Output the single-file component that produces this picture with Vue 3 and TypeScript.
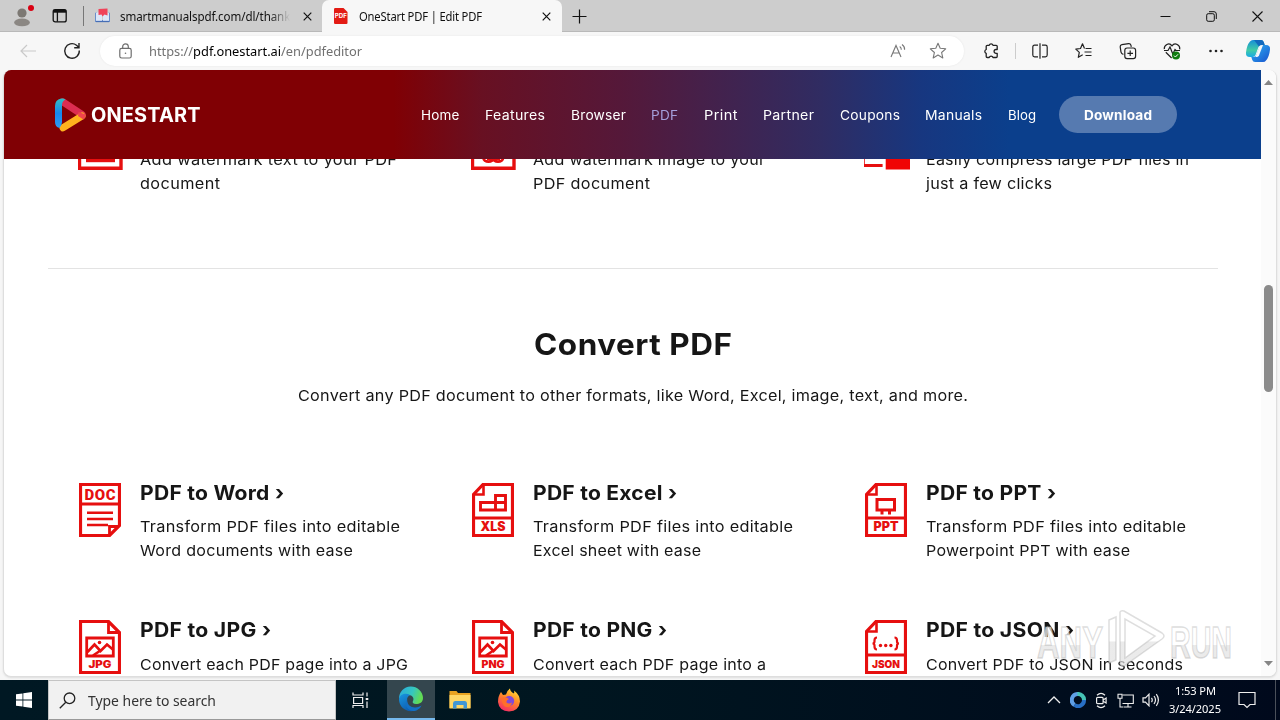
<script setup lang="ts">
interface NavItem { label: string; width: number; active?: boolean }
interface Line { text: string; width: number }
interface Tool { icon: string; title: Line; lines: Line[] }

// Makes a text span the given width, sharing the difference between glyph width and letter spacing.
const fit = (el: HTMLElement, target: number): void => {
  const natural = el.getBoundingClientRect().width
  const gaps = (el.textContent ?? '').length - 1
  if (gaps < 1 || natural === 0) return
  const scale = Math.pow(target / natural, 0.7)
  el.style.letterSpacing = `${((target / scale - natural) / gaps).toFixed(3)}px`
  el.style.transform = `scaleX(${scale.toFixed(4)})`
  el.style.width = `${target}px`
}
const vFit = {
  mounted: (el: HTMLElement, binding: { value: number }) => fit(el, binding.value),
}

const nav: NavItem[] = [
  { label: 'Home', width: 38.5 },
  { label: 'Features', width: 60 },
  { label: 'Browser', width: 55 },
  { label: 'PDF', width: 27, active: true },
  { label: 'Print', width: 33.5 },
  { label: 'Partner', width: 51 },
  { label: 'Coupons', width: 60 },
  { label: 'Manuals', width: 57 },
  { label: 'Blog', width: 28 },
]

const editTools: { icon: string; lines: Line[] }[] = [
  { icon: 'text', lines: [{ text: 'Add watermark text to your PDF', width: 257 }, { text: 'document', width: 80 }] },
  { icon: 'image', lines: [{ text: 'Add watermark image to your', width: 232 }, { text: 'PDF document', width: 117 }] },
  { icon: 'compress', lines: [{ text: 'Easily compress large PDF files in', width: 263 }, { text: 'just a few clicks', width: 126 }] },
]

const tools: Tool[] = [
  { icon: 'DOC', title: { text: 'PDF to Word ›', width: 144 }, lines: [{ text: 'Transform PDF files into editable', width: 260 }, { text: 'Word documents with ease', width: 213 }] },
  { icon: 'XLS', title: { text: 'PDF to Excel ›', width: 144 }, lines: [{ text: 'Transform PDF files into editable', width: 260 }, { text: 'Excel sheet with ease', width: 168 }] },
  { icon: 'PPT', title: { text: 'PDF to PPT ›', width: 130 }, lines: [{ text: 'Transform PDF files into editable', width: 260 }, { text: 'Powerpoint PPT with ease', width: 204 }] },
  { icon: 'JPG', title: { text: 'PDF to JPG ›', width: 131 }, lines: [{ text: 'Convert each PDF page into a JPG', width: 268 }] },
  { icon: 'PNG', title: { text: 'PDF to PNG ›', width: 134 }, lines: [{ text: 'Convert each PDF page into a', width: 233 }] },
  { icon: 'JSON', title: { text: 'PDF to JSON ›', width: 148 }, lines: [{ text: 'Convert PDF to JSON in seconds', width: 257 }] },
]
</script>

<template>
  <div class="desktop">
    <div class="tabstrip">
      <svg class="profile" width="24" height="24" viewBox="0 0 24 24">
        <circle cx="10" cy="8" r="4.600" fill="#7c7873" />
        <ellipse cx="10" cy="17.400" rx="7.900" ry="3.900" fill="#8b8783" />
        <circle cx="19" cy="3" r="3" fill="#d90012" />
      </svg>
      <svg class="workspaces" width="16" height="16" viewBox="0 0 16 16" fill="none" stroke="#111" stroke-width="1.300">
        <rect x="1.200" y="1.700" width="13" height="12.200" rx="2" />
        <path d="M1.200 3.200h13" stroke-width="3" /><path d="M5.400 4v9.600" />
      </svg>
      <span class="sep"></span>
      <div class="tab">
        <svg width="17" height="16" viewBox="0 0 17 16">
          <path d="M1 5l2-1v8l11 0V4l2 1v9H1z" fill="#6b8fc9" />
          <path d="M2 4.500h6v9.500l-6-1zM9 4.500h6V13l-6 1z" fill="#dce7f8" />
          <path d="M4.500 1l9-.5v7l-3-1-2 2-1-2-3 .5z" fill="#f0435a" />
          <path d="M2 13.500h13" stroke="#466eb5" stroke-width="1.300" />
        </svg>
        <span class="tab-title faded"><span v-fit="174" class="fit">smartmanualspdf.com/dl/thank-</span></span>
        <svg class="close" width="9" height="9" viewBox="0 0 9 9" stroke="#111" stroke-width="1.200"><path d="M.7.7l7.600 7.600M8.300.7L.7 8.300" /></svg>
      </div>
      <div class="tab active">
        <svg class="pdf-icon" width="14" height="16" viewBox="0 0 14 16">
          <path d="M0 1.200Q0 0 1.200 0H9.500L13.500 4v11q0 1-1.200 1H1.200Q0 16 0 15z" fill="#e31b14" />
          <text x=".8" y="10.300" font-family="Inter, sans-serif" font-weight="700" font-size="5.500" fill="#fff" textLength="12" lengthAdjust="spacingAndGlyphs">PDF</text>
        </svg>
        <span v-fit="123" class="fit active-title">OneStart PDF | Edit PDF</span>
        <svg class="close" width="9" height="9" viewBox="0 0 9 9" stroke="#111" stroke-width="1.200"><path d="M.7.7l7.600 7.600M8.300.7L.7 8.300" /></svg>
      </div>
      <svg class="plus" width="15" height="15" viewBox="0 0 15 15" stroke="#111" stroke-width="1.200"><path d="M7.500.500v14M.500 7.500h14" /></svg>
      <div class="window-buttons">
        <svg width="11" height="11" viewBox="0 0 11 11" stroke="#111"><path d="M.5 5.500h10" /></svg>
        <svg width="11" height="11" viewBox="0 0 11 11" fill="none" stroke="#111"><rect x=".7" y="2.700" width="7.600" height="7.600" rx="1.500" /><path d="M3 .7h5q2.300 0 2.300 2.300v5" /></svg>
        <svg width="11" height="11" viewBox="0 0 11 11" stroke="#111" stroke-width="1.100"><path d="M.5.500l10 10M10.500.500l-10 10" /></svg>
      </div>
    </div>

    <div class="toolbar">
      <svg class="back" width="17" height="14" viewBox="0 0 17 14" fill="none" stroke="#c9c9c9" stroke-width="1.200"><path d="M16 7H1M7 1L1 7l6 6" /></svg>
      <svg class="reload" width="18" height="18" viewBox="0 0 18 18" fill="none" stroke="#222" stroke-width="1.400"><path d="M16.300 8.500A7.300 7.300 0 1 1 13.500 3.200L16 5.600M16 1v4.800h-4.800" /></svg>
      <div class="address">
        <svg class="lock" width="13" height="16" viewBox="0 0 13 16" fill="none" stroke="#6e6e6e" stroke-width="1.200"><rect x=".8" y="5.400" width="11.400" height="9.600" rx="1.800" /><path d="M3.700 5.400V3.600a2.800 2.800 0 0 1 5.600 0v1.800" /><circle cx="6.500" cy="10.200" r=".8" fill="#6e6e6e" stroke="none" /></svg>
        <span v-fit="213" class="fit url">https://<b>pdf.onestart.ai</b>/en/pdfeditor</span>
        <svg class="read" width="17" height="16" viewBox="0 0 17 16" fill="none" stroke="#777" stroke-width="1.100"><path d="M1 14L6 2.500 11 14M2.800 10h6.400M9.700 3.500q1.800 1.200 1.600 3.300M12 1.500q2.900 2 2.600 5.300" /></svg>
        <svg class="star" width="18" height="18" viewBox="0 0 18 18" fill="none" stroke="#777" stroke-width="1.100" stroke-linejoin="round"><path d="M9 1.300l2.200 5 5.500.5-4.100 3.700 1.200 5.400L9 13.100l-4.800 2.800 1.200-5.400L1.300 6.800l5.500-.5z" /></svg>
      </div>
      <div class="actions">
        <svg width="18" height="18" viewBox="0 0 18 18" fill="none" stroke="#222" stroke-width="1.300" stroke-linejoin="round"><path d="M5.200 3.300h2a2 2 0 0 1 3.800 0h3.200q1 0 1 1v3.200h-1.200a1.800 1.800 0 0 0 0 3.800h1.200v3.200q0 1-1 1H11a2 2 0 0 0-3.800 0h-2q-1 0-1-1v-3.200a2 2 0 0 1 0-3.800V4.300q0-1 1-1z" /></svg>
        <span class="divider"></span>
        <svg width="18" height="18" viewBox="0 0 18 18" fill="none" stroke="#222" stroke-width="1.200"><path d="M7 3.200H3.600q-1.800 0-1.800 1.800v8q0 1.800 1.800 1.800H7M11 3.200h3.400q1.800 0 1.800 1.800v8q0 1.800-1.800 1.800H11M9 1.200v15.600" /></svg>
        <svg width="18" height="18" viewBox="0 0 18 18" fill="none" stroke="#222" stroke-width="1.200" stroke-linejoin="round"><path d="M9.500 6.500L7.500 1.800 5.500 6.500l-4.700.6 3.500 3.300-1 4.900 4.400-2.500M10.500 6.500h6M9.500 10h7M10.500 13.500h6" /></svg>
        <svg width="18" height="18" viewBox="0 0 18 18" fill="none" stroke="#222" stroke-width="1.200"><path d="M4.400 12.400Q2.500 12 2 10.100L1.200 4.800Q1 3 2.900 2.700L9.600 1.600q1.800-.2 2.300 1.500l.4 1.800" /><rect x="5.800" y="6" width="10.800" height="10.600" rx="2.300" /><path d="M11.200 8.500v5.600M8.400 11.300H14" /></svg>
        <svg width="18" height="18" viewBox="0 0 18 18" fill="none" stroke="#222" stroke-width="1.200"><path d="M1.300 7.200C.8 3.300 6-.3 9 3.800c3-4.100 8.400-.4 7.700 3.600M1 8.500h4l2-3.500 2.800 7L12 7.500l1 1h4M2.800 10.300L8.600 16" /><circle cx="13" cy="13.500" r="4" fill="#107c10" stroke="none" /><path d="M11 13.600l1.400 1.400 2.600-2.700" stroke="#fff" stroke-width="1" /></svg>
        <svg width="18" height="18" viewBox="0 0 18 18" fill="#222"><circle cx="3.500" cy="9" r="1.300" /><circle cx="9" cy="9" r="1.300" /><circle cx="14.500" cy="9" r="1.300" /></svg>
      </div>
      <svg class="copilot" width="26" height="24" viewBox="0 0 26 24">
        <defs>
          <linearGradient id="cpA" x1="0" y1="0" x2="0" y2="1"><stop offset="0" stop-color="#168ed7" /><stop offset=".6" stop-color="#41cba6" /><stop offset="1" stop-color="#18a9e5" /></linearGradient>
          <linearGradient id="cpB" x1="0" y1="0" x2="1" y2="1"><stop offset="0" stop-color="#2cb4f5" /><stop offset="1" stop-color="#1952cd" /></linearGradient>
        </defs>
        <path d="M8 1h8q2 0 2.700 2l1 3h-3.500q-2 0-2.800 2.200L10.500 16q-.8 2-3 2H5q-4.500 0-4-4.500Q1.800 6 5 2.500 6 1 8 1z" fill="url(#cpA)" />
        <path d="M18 23h-8q-2 0-2.700-2l-1-3h2q2.400 0 3.200-2.200L14.500 8q.8-2 3-2H21q4.500 0 4 4.500-.8 7.500-4 11Q20 23 18 23z" fill="url(#cpB)" />
        <path d="M9 1h7q2 0 2.700 2l1 3h-3.500q-1.500 0-2.300 1.500z" fill="#1269bd" />
        <path d="M14.500 7.500q.8-1.500 2.500-1.500h1L14 16.500q-.8 1.500-2.500 1.500h-1z" fill="#f7f7f7" />
      </svg>
    </div>

    <div class="page">
      <div class="site">
        <header class="site-header">
          <svg class="logo" width="32" height="34" viewBox="0 0 32 34" fill="none">
            <defs>
              <linearGradient id="lgB" x1="0" y1="0" x2="0" y2="1"><stop offset="0" stop-color="#32bec3" /><stop offset=".5" stop-color="#1687ee" /><stop offset="1" stop-color="#2f9bf2" /></linearGradient>
            </defs>
            <path d="M8 4L27 16.500" stroke="#dc2d51" stroke-width="7" stroke-linecap="round" />
            <path d="M8 29.800L27 18" stroke="#ffb21e" stroke-width="7" stroke-linecap="round" />
            <path d="M23.500 14l7.400 2.500q.3 2.500-2.400 5l-5.500-3.500z" fill="#f0444c" />
            <path d="M0 8Q0 2 6 .6 8.500.2 10.500 1.500 7 3 7 7v17q0 3-2.500 6Q0 29 0 24z" fill="url(#lgB)" />
          </svg>
          <span v-fit="109.5" class="fit brand">ONESTART</span>
          <nav class="nav">
            <span v-for="item in nav" :key="item.label" v-fit="item.width" class="fit" :class="{ current: item.active }">{{ item.label }}</span>
          </nav>
          <div class="download"><span v-fit="68" class="fit">Download</span></div>
        </header>

        <section class="edit-row">
          <div v-for="tool in editTools" :key="tool.icon" class="edit-card">
            <svg width="62" height="22" viewBox="0 0 62 22" fill="none" stroke="#e60f0f">
              <template v-if="tool.icon === 'text'">
                <path d="M1.500 0v20.300H43V0" stroke-width="3.400" /><rect x="8" y="8" width="29" height="6.200" fill="#e60f0f" stroke="none" />
              </template>
              <template v-else-if="tool.icon === 'image'">
                <path d="M1.500 0v20.300H43V0" stroke-width="3.400" /><ellipse cx="17.500" cy="10" rx="5" ry="3.600" stroke-width="2.800" /><ellipse cx="27" cy="10" rx="5" ry="3.600" stroke-width="2.800" /><path d="M16 11h13" stroke-width="2.600" />
              </template>
              <template v-else>
                <path d="M-.7 0v17.500h19.300" stroke-width="3" /><rect x="21.700" y="0" width="24.300" height="21.500" fill="#f00505" stroke="none" />
              </template>
            </svg>
            <div class="desc"><p v-for="l in tool.lines" :key="l.text"><span v-fit="l.width" class="fit">{{ l.text }}</span></p></div>
          </div>
        </section>

        <hr class="rule" />
        <h1 class="heading"><span v-fit="198" class="fit">Convert PDF</span></h1>
        <p class="lead"><span v-fit="670" class="fit">Convert any PDF document to other formats, like Word, Excel, image, text, and more.</span></p>

        <section class="tools">
          <article v-for="tool in tools" :key="tool.icon" class="tool">
            <svg width="42" height="54" viewBox="0 0 42 54" fill="none" stroke="#e60f0f" stroke-width="3.200">
              <template v-if="tool.icon === 'DOC'">
                <path d="M1.500 1.500h39v41l-10 10h-29zM1.500 21h39" /><path d="M8 29.700h26M8 36h26M8 42h21" stroke-width="2.500" /><path d="M30.500 52v-8.500H40" stroke-width="2.800" />
                <text class="doc-label" x="5.500" y="16.800" font-size="15" textLength="31" fill="#e60f0f" stroke="none">DOC</text>
              </template>
              <template v-else-if="tool.icon === 'JPG' || tool.icon === 'PNG'">
                <path d="M1.500 1.500h28l11 11v40h-39z" /><path d="M29.500 2v10.500H40M7.700 18h26.600v18h-26.600z" stroke-width="2.800" />
                <path d="M8.500 32l7-7.500 6 6.500 6.500-6.500 6.500 5.500M14 35.500l7.500-5" stroke-width="2.600" /><circle cx="20.500" cy="22.500" r="1.800" fill="#e60f0f" stroke="none" />
                <text x="9.500" y="48.300" font-size="10" font-weight="900" textLength="23" lengthAdjust="spacingAndGlyphs" fill="#e60f0f" stroke="none">{{ tool.icon }}</text>
              </template>
              <template v-else>
                <path d="M11 1.500h29.500v51h-39v-41zM1.500 35h39" /><path d="M11.500 2v9.500H2" stroke-width="2.600" />
                <path v-if="tool.icon === 'XLS'" d="M8.500 19.500h25v7.500h-25zM23.500 27V12.500h10V27" stroke-width="2.900" />
                <path v-else-if="tool.icon === 'PPT'" d="M12 16.500h17.500V27H12zM17 27.500v4M24.500 27.500v4" stroke-width="3" />
                <template v-else>
                  <path d="M12 17.500q-2.500 0-2.500 3v1q0 2-2 2 2 0 2 2v1q0 3 2.500 3M29.500 17.500q2.500 0 2.500 3v1q0 2 2 2-2 0-2 2v1q0 3-2.500 3" stroke-width="2.200" />
                  <g fill="#e60f0f" stroke="none"><circle cx="15.500" cy="25.500" r="1.700" /><circle cx="20.700" cy="25.500" r="1.700" /><circle cx="25.900" cy="25.500" r="1.700" /></g>
                </template>
                <text :x="tool.icon === 'JSON' ? 7 : 8.500" :y="tool.icon === 'JSON' ? 47.500 : 48" :font-size="tool.icon === 'JSON' ? 10.500 : 12.500" font-weight="900" :textLength="tool.icon === 'JSON' ? 28 : 25" lengthAdjust="spacingAndGlyphs" fill="#e60f0f" stroke="none">{{ tool.icon }}</text>
              </template>
            </svg>
            <div class="tool-body">
              <h2><span v-fit="tool.title.width" class="fit">{{ tool.title.text }}</span></h2>
              <div class="desc"><p v-for="l in tool.lines" :key="l.text"><span v-fit="l.width" class="fit">{{ l.text }}</span></p></div>
            </div>
          </article>
        </section>
      </div>
      <div class="scrollbar">
        <svg width="9" height="5" viewBox="0 0 9 5"><path d="M4.500 0L9 5H0z" fill="#858585" /></svg>
        <div class="thumb"></div>
        <svg width="9" height="5" viewBox="0 0 9 5"><path d="M4.500 5L9 0H0z" fill="#858585" /></svg>
      </div>
    </div>

    <div class="taskbar">
      <div class="start"><svg width="16" height="16" viewBox="0 0 16 16" fill="#fff"><path d="M0 2.300L6.500 1.400v6.200H0zM7.300 1.300L16 0v7.600H7.300zM0 8.400h6.500v6.200L0 13.700zM7.300 8.400H16V16L7.300 14.700z" /></svg></div>
      <div class="search">
        <svg width="17" height="17" viewBox="0 0 17 17" fill="none" stroke="#222" stroke-width="1.300"><circle cx="10.500" cy="6.300" r="5.300" /><path d="M6.800 10.200L.8 16.200" /></svg>
        <span v-fit="128" class="fit">Type here to search</span>
      </div>
      <div class="task"><svg width="18" height="17" viewBox="0 0 18 17" fill="none" stroke="#eee" stroke-width="1.200"><path d="M1 .500v2.500h10V.500M1 16v-2.500h10V16M1.600 5.500h9v6h-9zM15 .500v4M15 9.500V16" /><path d="M13.700 7h2.600" stroke-width="2" /></svg></div>
      <div class="task edge">
        <svg width="26" height="26" viewBox="0 0 26 26">
          <defs>
            <linearGradient id="edA" x1="0" y1="0" x2="1" y2=".3"><stop offset="0" stop-color="#28a8df" /><stop offset=".6" stop-color="#35c6c0" /><stop offset="1" stop-color="#62db55" /></linearGradient>
            <linearGradient id="edB" x1="0" y1="0" x2=".8" y2="1"><stop offset="0" stop-color="#1895e0" /><stop offset="1" stop-color="#0b51a5" /></linearGradient>
          </defs>
          <path d="M1 13A12 12 0 0 1 25 12c0 4.500-3.500 6-7 6-3 0-4-1.500-3-3 1.500-2.500-.5-6-4.500-6S2 11 1 13z" fill="url(#edA)" />
          <path d="M1 13C2 8 8 6.500 12 9c-4 2-4 8-.5 11 3.500 2.800 8.500 2.500 12-.5C20 25 13 26.500 8 24c-5-2.300-7-6.500-7-11z" fill="url(#edB)" />
          <path d="M9.500 13c-1.500 5 3 9 8 8.500 2.500-.2 4.500-1 6-2-3 6-8.500 6-11 5-4-2-6-7-3-11.500z" fill="#1370c5" />
        </svg>
      </div>
      <div class="task">
        <svg width="22" height="20" viewBox="0 0 22 20"><path d="M.5 1h7l1.500 2h12.500v15H.5z" fill="#e9a321" /><path d="M.5 5h21v13.500H.5z" fill="#ffd766" /><path d="M4 18.500v-5q0-2.500 2-2.500h10q2 0 2 2.500v5h-3.500V15h-7v3.500z" fill="#4197d6" /></svg>
      </div>
      <div class="task">
        <svg width="24" height="24" viewBox="0 0 24 24">
          <defs><linearGradient id="ff" x1=".8" y1="0" x2=".3" y2="1"><stop offset="0" stop-color="#ffe43a" /><stop offset=".45" stop-color="#ff8b26" /><stop offset="1" stop-color="#f52b65" /></linearGradient></defs>
          <path d="M4 4l2 3 3-.5Q10 2.500 13 .500q0 3 4 5 .5-1.500 0-3Q23 7 23 13.500 22 23 12 23.500 2 23 1 14 1 8 4 4z" fill="url(#ff)" />
          <circle cx="12.200" cy="13" r="5" fill="#8049d9" /><path d="M4.500 10q4-2 7.500 1-3 1-2.500 3.500 2.500 2 5.500 0-1 5-6 4.500-4-1.500-4.500-9z" fill="#ff6f2a" />
        </svg>
      </div>
      <div class="tray">
        <svg width="14" height="8" viewBox="0 0 14 8" fill="none" stroke="#eee" stroke-width="1.300"><path d="M1 7l6-6 6 6" /></svg>
        <svg width="16" height="16" viewBox="0 0 16 16" fill="none" stroke-width="4"><path d="M4.500 13A6 6 0 0 1 8 2" stroke="#5f9fe6" /><path d="M7.500 2a6 6 0 0 1 6.500 6.500" stroke="#45c3b5" /><path d="M14 8A6 6 0 0 1 4.500 13" stroke="#286fc4" /></svg>
        <svg width="14" height="17" viewBox="0 0 14 17" fill="none" stroke="#eee" stroke-width="1.200"><path d="M3 3.200q4-3.500 8 0M3 13.800q4 3.500 8 0" /><rect x="2.600" y="5.300" width="6.500" height="6.400" rx="1" /><path d="M9.100 8l3-2v5l-3-1.700" /></svg>
        <svg width="17" height="15" viewBox="0 0 17 15" fill="none" stroke="#eee" stroke-width="1.100"><path d="M5.500 2h10.800v8.500H5.500M11 10.500V14M6.500 14h8" /><path d="M1 1.200h4v4H1zM3 5.200V14h3" /></svg>
        <svg width="18" height="14" viewBox="0 0 18 14" fill="none" stroke="#eee" stroke-width="1.200"><path d="M1 4.800h2.500L7 1.200v11.600L3.500 9.200H1zM9.500 4.800q1.500 2.200 0 4.400M12 3q3 4 0 8M14.300 1.200q4.200 5.800 0 11.600" /></svg>
      </div>
      <div class="clock"><span v-fit="41" class="fit">1:53 PM</span><span v-fit="52" class="fit">3/24/2025</span></div>
      <svg class="note" width="18" height="18" viewBox="0 0 18 18" fill="none" stroke="#eee" stroke-width="1.200"><path d="M1 1.500h16v12h-5l-3 3-3-3H1z" /></svg>
      <span class="peek"></span>
    </div>

    <svg class="watermark" width="204" height="64" viewBox="0 0 204 64">
      <defs><linearGradient id="wm" x1="0" y1="0" x2="0" y2="1"><stop offset="0" stop-color="#fff" stop-opacity=".72" /><stop offset=".55" stop-color="#fff" stop-opacity=".72" /><stop offset=".56" stop-color="#e2e2e2" stop-opacity=".7" /><stop offset="1" stop-color="#e2e2e2" stop-opacity=".7" /></linearGradient></defs>
      <g fill="url(#wm)" stroke="#a8a8a8" stroke-opacity=".38" stroke-width="1.500">
        <text x="4" y="51" font-size="44" textLength="66" lengthAdjust="spacingAndGlyphs">ANY</text>
        <text x="137" y="51" font-size="44" textLength="62" lengthAdjust="spacingAndGlyphs">RUN</text>
        <path fill-rule="evenodd" d="M76 13l7-3v43l-7 3zM87 5q1-2 4-1l38 22q4 3 0 6L91 59q-4 1-4-3zM92 12v39l30-22z" />
      </g>
    </svg>
  </div>
</template>

<style>
html, body { overflow: hidden; }
</style>

<style scoped>
* { box-sizing: border-box; }
.desktop { position: relative; width: 1280px; height: 720px; display: flex; flex-direction: column; background: #f6f6f6; font-family: "Noto Sans", "Open Sans", sans-serif; overflow: hidden; }
svg { display: block; flex: none; }
.fit { display: inline-block; white-space: pre; flex: none; text-align: left; transform-origin: 0 50%; }

.tabstrip { height: 32px; flex: none; display: flex; align-items: center; background: #cdcdcd; font-size: 12px; color: #111; box-shadow: inset 0 -1px #b9b9b9; }
.profile { margin: 1px 0 0 12px; }
.workspaces { margin-left: 16px; }
.sep { width: 1px; height: 20px; background: #777; margin-left: 15px; }
.tab { width: 238px; height: 32px; display: flex; align-items: center; padding-left: 10px; }
.tab-title { margin-left: 9px; width: 170px; overflow: hidden; }
.faded { mask-image: linear-gradient(90deg, #000 88%, transparent 100%); }
.tab .close { margin-left: 13px; }
.tab.active { width: 240px; background: #f7f7f7; border-radius: 7px 7px 0 0; padding-left: 12px; }
.active-title { margin-left: 11px; }
.tab.active .close { margin-left: 60px; }
.plus { margin-left: 10px; }
.window-buttons { margin-left: auto; margin-right: 17px; display: flex; gap: 35px; }

.toolbar { height: 38px; flex: none; display: flex; align-items: center; background: #f7f7f7; }
.back { margin-left: 20px; }
.reload { margin-left: 26px; }
.address { margin-left: 19px; width: 864px; height: 30px; border-radius: 15px; background: #fff; display: flex; align-items: center; box-shadow: 0 0 2px #e4e4e4; }
.lock { margin-left: 19px; }
.url { margin-left: 17px; font-size: 13px; color: #717171; }
.url b { font-weight: 400; color: #000; }
.read { margin-left: auto; }
.star { margin: 0 17px 0 22px; }
.actions { display: flex; align-items: center; margin-left: 18px; gap: 26px; }
.divider { width: 1px; height: 16px; background: #ccc; margin: 0 -12px 0 -11px; }
.divider + svg { margin-left: 1px; }
.copilot { margin-left: 20px; }

.page { width: 1274px; height: 607px; margin-left: 3px; flex: none; display: flex; background: #fff; border: 1px solid #dedede; border-top: 0; border-radius: 8px; overflow: hidden; box-shadow: 0 1px 2px #ddd; }
.site { width: 1257px; height: 606px; flex: none; overflow: hidden; font-family: Inter, "Open Sans", sans-serif; color: #161616; }
.site-header { position: relative; z-index: 1; height: 89px; display: flex; align-items: center; background: linear-gradient(90deg, #800004 31%, #681022 38%, #551839 49%, #302c62 65%, #173780 73%, #0b3f8c 80%); }
.logo { margin-left: 51px; }
.brand { margin-left: 4px; color: #fff; font-size: 19.500px; font-weight: 700; }
.nav { display: flex; gap: 25.600px; margin-left: 220.500px; color: #fff; font-size: 13px; }
.nav .current { color: #a5a0dc; }
.download { width: 118px; height: 37px; margin-left: 23.500px; display: flex; align-items: center; justify-content: center; background: #567ab0; border-radius: 19px; color: #fff; font-size: 13px; font-weight: 700; }

.edit-row { margin: -11px 0 0 74px; display: grid; grid-template-columns: repeat(3, 393px); height: 48px; }
.edit-card { display: flex; white-space: nowrap; }
.desc { font-size: 15px; }
.desc p { margin: 0; height: 24px; line-height: 24px; white-space: nowrap; }
.rule { margin: 72px 43px 0 44px; height: 1px; border: 0; background: #e3e3e3; }
.heading { margin: 55px 0 0 1px; height: 40px; line-height: 40px; font-size: 29.500px; font-weight: 650; text-align: center; }
.lead { margin: 20px 0 0 1px; height: 24px; line-height: 24px; font-size: 15px; text-align: center; }
.tools { margin: 75px 0 0 75px; display: grid; grid-template-columns: repeat(3, 393px); grid-auto-rows: 137px; }
.tool { display: flex; gap: 19px; }
.tool svg { font-family: Inter, sans-serif; }
.doc-label { font-family: Roboto, sans-serif; font-weight: 900; }
.tool h2 { margin: -2px 0 10px; height: 24px; line-height: 24px; font-size: 20px; font-weight: 650; }
.tool:nth-child(n + 4) h2 { margin-bottom: 11px; }

.scrollbar { width: 15px; flex: none; background: #fbfbfb; display: flex; flex-direction: column; align-items: center; padding: 10px 0; }
.thumb { width: 9px; height: 107px; border-radius: 5px; background: #8b8b8b; margin: 200px 0 auto; }

.taskbar { margin-top: 3px; height: 40px; flex: none; display: flex; align-items: center; background: linear-gradient(90deg, #001823 0, #001620 45%, #00091c 100%); color: #fff; }
.start { width: 48px; display: flex; justify-content: center; }
.search { width: 288px; height: 40px; background: #f1f1f1; border: 1px solid #c4c4c4; border-bottom-color: #999; display: flex; align-items: center; padding-left: 10px; gap: 12px; color: #333; font-size: 14px; }
.task { height: 40px; width: 49px; display: flex; align-items: center; justify-content: center; }
.task.edge { width: 48px; margin-left: 2px; background: #34464e; border-bottom: 2px solid #76b9ed; }
.tray { margin-left: auto; display: flex; align-items: center; gap: 8.500px; }
.clock { width: 56px; margin-left: 7px; display: flex; flex-direction: column; align-items: center; font-size: 11.500px; line-height: 18px; }
.note { margin-left: 15px; }
.peek { width: 1px; height: 40px; background: #4a505a; margin: 0 4px 0 19px; }

.watermark { position: absolute; left: 1033px; top: 607px; font-family: "Liberation Sans", sans-serif; font-weight: 700; }
</style>
